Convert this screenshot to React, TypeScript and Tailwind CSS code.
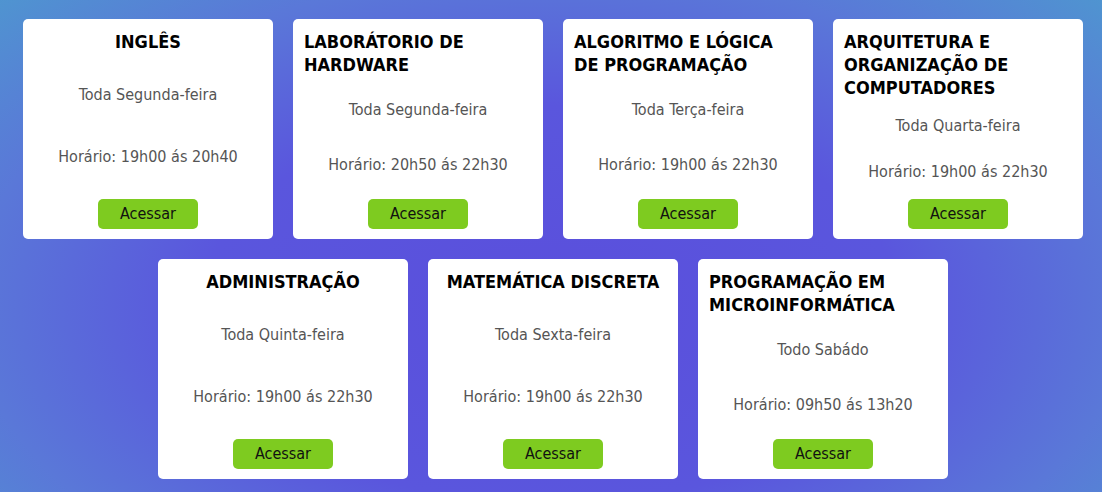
const aulas = [
  { titulo: "Inglês", dia: "Toda Segunda-feira", horario: "Horário: 19h00 ás 20h40" },
  { titulo: "Laborátorio de Hardware", dia: "Toda Segunda-feira", horario: "Horário: 20h50 ás 22h30" },
  { titulo: "Algoritmo e Lógica de Programação", dia: "Toda Terça-feira", horario: "Horário: 19h00 ás 22h30" },
  { titulo: "Arquitetura e Organização de Computadores", dia: "Toda Quarta-feira", horario: "Horário: 19h00 ás 22h30" },
  { titulo: "Administração", dia: "Toda Quinta-feira", horario: "Horário: 19h00 ás 22h30" },
  { titulo: "Matemática Discreta", dia: "Toda Sexta-feira", horario: "Horário: 19h00 ás 22h30" },
  { titulo: "Programação em Microinformática", dia: "Todo Sabádo", horario: "Horário: 09h50 ás 13h20" },
];

function Card({ titulo, dia, horario }: { titulo: string; dia: string; horario: string }) {
  return (
    <div className="w-[250px] h-[220px] bg-white rounded-[5px] flex flex-col items-center justify-between pt-[11px] pb-[10px] px-[11px]">
      <h2 className="text-left uppercase font-bold text-[18px] leading-[23px] text-black">{titulo}</h2>
      <p className="text-[16px] leading-[20px] text-[#555]">{dia}</p>
      <p className="text-[16px] leading-[20px] text-[#555] mt-[10px]">{horario}</p>
      <button className="w-[100px] h-[30px] rounded-[5px] bg-[#7ecb20] text-[16px] text-[#111]">Acessar</button>
    </div>
  );
}

export default function App() {
  return (
    <div
      className="w-[1102px] h-[492px] overflow-hidden bg-[radial-gradient(ellipse_70%_90%_at_50%_62%,#5a4fdc_0%,#5a56dd_45%,#5a78d8_75%,#4f95d0_100%)] pt-[19px] pl-[4px]"
      style={{ fontFamily: '"DejaVu Sans Condensed", "DejaVu Sans", sans-serif' }}
    >
      <div className="flex flex-wrap justify-center gap-5">
        {aulas.map((a) => (
          <Card key={a.titulo} {...a} />
        ))}
      </div>
    </div>
  );
}
